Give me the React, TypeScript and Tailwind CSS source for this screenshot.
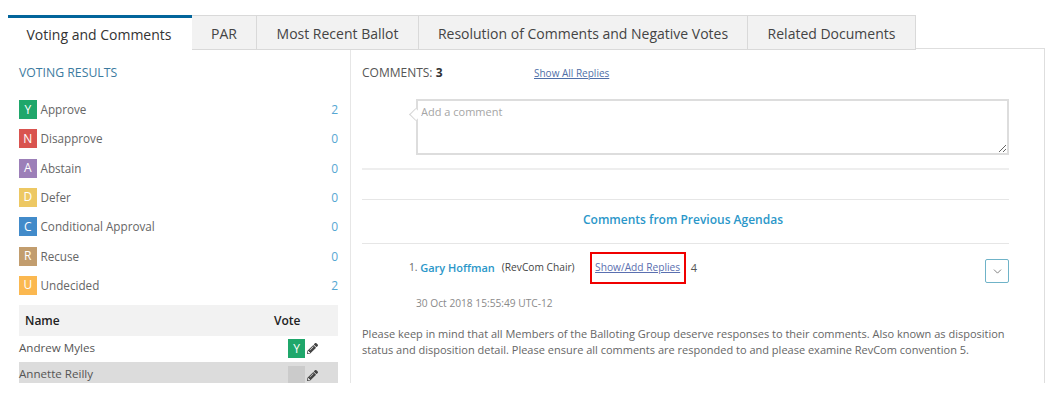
import { FaPencilAlt } from "react-icons/fa";
import { ChevronDown } from "lucide-react";

const tabs = [
  { label: "PAR", width: "w-[65px]" },
  { label: "Most Recent Ballot", width: "w-[162px]" },
  { label: "Resolution of Comments and Negative Votes", width: "w-[329px]" },
  { label: "Related Documents", width: "w-[168px]" },
];

const results = [
  { code: "Y", label: "Approve", count: 2, color: "bg-[#1fa76b]" },
  { code: "N", label: "Disapprove", count: 0, color: "bg-[#d9534f]" },
  { code: "A", label: "Abstain", count: 0, color: "bg-[#9c7fb8]" },
  { code: "D", label: "Defer", count: 0, color: "bg-[#edc863]" },
  { code: "C", label: "Conditional Approval", count: 0, color: "bg-[#428bca]" },
  { code: "R", label: "Recuse", count: 0, color: "bg-[#c29d6e]" },
  { code: "U", label: "Undecided", count: 2, color: "bg-[#fbb850]" },
];

export default function App() {
  return (
    <div className="h-[408px] w-[1057px] overflow-hidden bg-white font-['Open_Sans',sans-serif] text-[#555]">
      <div className="flex h-[383px] flex-col pl-2 pr-[12px] pt-[15px]">
        {/* tabs */}
        <div className="relative z-10 -mb-[2px] flex h-[35px] shrink-0">
          <div className="flex h-[36px] w-[184px] items-center justify-center border-t-[3px] border-[#02659b] bg-white pr-[2px] text-[14px] text-[#333]">
            Voting and Comments
          </div>
          {tabs.map((tab) => (
            <div
              key={tab.label}
              className={`flex h-[35px] items-center justify-center border border-l-0 border-[#d9d9d9] bg-[#f2f2f2] pt-[2px] text-[14px] text-[#444] ${tab.width}`}
            >
              {tab.label}
            </div>
          ))}
        </div>

        <div className="flex min-h-0 flex-1 overflow-hidden border-r border-t border-[#dedede] pl-[11px]">
          {/* voting results */}
          <div className="w-[319px] shrink-0 pt-[14px]">
            <div className="text-[12.25px] leading-[20px] text-[#3b7aa0]">VOTING RESULTS</div>
            <ul className="mt-[17px]">
              {results.map((r) => (
                <li key={r.code} className="flex h-[29.33px] items-start">
                  <span
                    className={`flex h-[19px] w-[17.5px] items-center justify-center text-[12px] text-white ${r.color}`}
                  >
                    {r.code}
                  </span>
                  <span className="ml-1 text-[11.7px] leading-[19px] text-[#666]">{r.label}</span>
                  <span className="ml-auto text-[12px] leading-[19px] text-[#55a7d3]">{r.count}</span>
                </li>
              ))}
            </ul>
            <div className="flex h-[31px] items-center bg-[#f2f2f2] text-[12px] font-semibold text-[#222]">
              <span className="ml-[6px] w-[249px]">Name</span>
              <span>Vote</span>
            </div>
            <div className="flex h-[26px] items-start pt-[3px] text-[11.6px] text-[#555]">
              <span className="mt-px w-[269px] leading-[16px]">Andrew Myles</span>
              <span className="flex h-[19px] w-[17px] items-center justify-center bg-[#1fa76b] text-[12px] text-white">Y</span>
              <FaPencilAlt className="ml-[2px] mt-[4px] text-[11px] text-[#444]" />
            </div>
            <div className="flex h-[27px] items-start bg-[#dcdcdc] pt-[4px] text-[11.6px] text-[#555]">
              <span className="w-[269px] leading-[16px]">Annette Reilly</span>
              <span className="h-[19px] w-[17px] bg-[#cbcbcb]" />
              <FaPencilAlt className="ml-[2px] mt-[4px] text-[11px] text-[#444]" />
            </div>
          </div>

          {/* comments */}
          <div className="ml-[12px] min-w-0 flex-1 border-l border-[#e6e6e6] pl-[11px] pr-[35px] pt-[14px]">
            <div className="flex h-[20px] items-center text-[12px] text-[#555]">
              <span className="w-[172px]">
                COMMENTS: <b className="font-bold text-[#333]">3</b>
              </span>
              <a href="#" className="text-[10px] text-[#4f6fa8] underline">
                Show All Replies
              </a>
            </div>

            <div className="relative ml-[54px] mt-[16px] h-[56px]">
              <textarea
                placeholder="Add a comment"
                className="block h-[56px] w-full border-2 border-[#dddddd] bg-white px-[3px] py-[3px] text-[11px] outline-none placeholder:text-[#a5a5a5]"
              />
              <span className="absolute left-[-5px] top-[11px] h-[9px] w-[9px] rotate-45 border-b border-l border-[#d5d5d5] bg-white" />
            </div>

            <div className="mt-[13px] h-[2px] bg-[#eeeeee]" />
            <div className="mt-[29px] h-px bg-[#e6e6e6]" />
            <div className="flex h-[43px] items-center justify-center pb-[3px] pr-[5px] text-[12px] font-semibold text-[#2b97c9]">
              Comments from Previous Agendas
            </div>
            <div className="h-px bg-[#e6e6e6]" />

            <div className="mt-[8px] flex h-[32px] items-center">
              <div className="flex items-center pl-[47px] text-[10.2px] text-[#444]">
                <span className="text-[#666]">1.&nbsp;</span>
                <span className="text-[11px] font-semibold text-[#2b97c9]">Gary Hoffman</span>
                <span className="ml-[7px]">(RevCom Chair)</span>
              </div>
              <div className="ml-[15px] flex h-[32px] w-[96px] items-center justify-center border-2 border-[#f00000]">
                <a href="#" className="text-[10.2px] text-[#5a6fb0] underline">
                  Show/Add Replies
                </a>
              </div>
              <span className="ml-[5px] text-[11px] text-[#555]">4</span>
              <button className="ml-auto mt-[7px] flex h-[24px] w-[24px] items-center justify-center self-start rounded-[2px] border border-[#6fb3c8] bg-white">
                <ChevronDown size={13} strokeWidth={1.5} className="text-[#666]" />
              </button>
            </div>

            <div className="mt-[12px] pl-[54px] text-[10.2px] leading-[14px] text-[#8a8a8a]">30 Oct 2018 15:55:49 UTC-12</div>
            <p className="mt-[16px] text-[11px] leading-[16px] text-[#666]">
              Please keep in mind that all Members of the Balloting Group deserve responses to their comments. Also known as disposition status and disposition detail. Please ensure all comments are responded to and please examine RevCom convention 5.
            </p>
          </div>
        </div>
      </div>
    </div>
  );
}
